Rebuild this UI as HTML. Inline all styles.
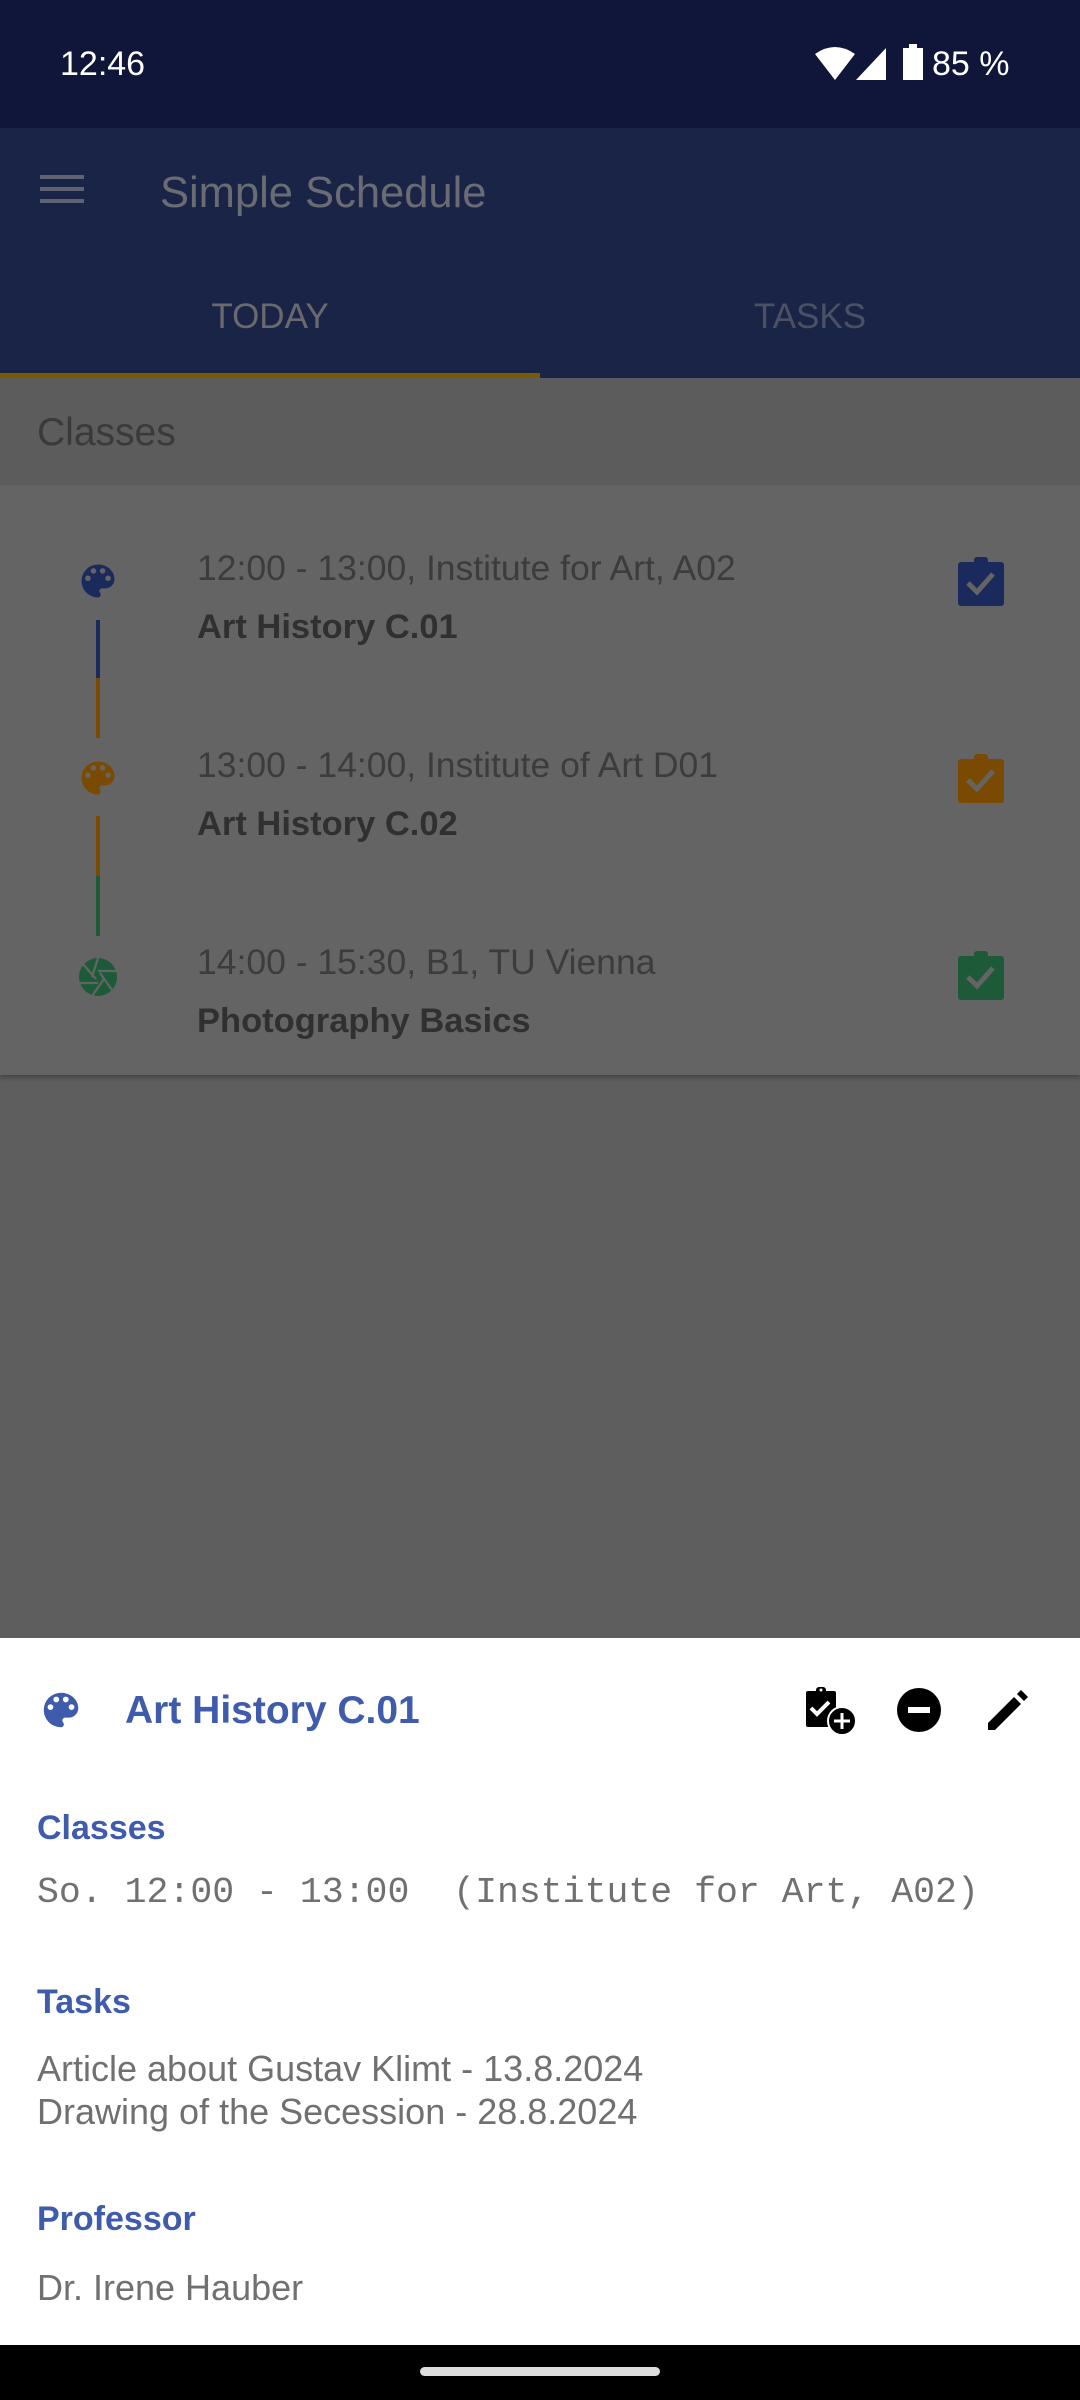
<!DOCTYPE html>
<html><head><meta charset="utf-8"><style>
*{margin:0;padding:0;box-sizing:border-box}
body{width:1080px;height:2400px;position:relative;overflow:hidden;background:#5e5e5e;font-family:"Liberation Sans",Roboto,sans-serif}
.a{position:absolute;white-space:pre}
svg{position:absolute}
</style></head><body>
<div class="a" style="left:0;top:0;width:1080px;height:128px;background:#10153a"></div>
<div class="a" style="left:60px;top:42px;color:#fff;font-size:34px;line-height:44px">12:46</div>
<svg style="left:815px;top:46px" width="40" height="34" viewBox="0 0 40 34"><path d="M0 8 Q20 -6 40 8 L20 34 Z" fill="#fff"/></svg>
<svg style="left:856px;top:48px" width="30" height="32" viewBox="0 0 30 32"><path d="M30 0 V32 H0 Z" fill="#fff"/></svg>
<svg style="left:903px;top:44px" width="20" height="36" viewBox="0 0 20 36"><path d="M6 0h8v4h6v32H0V4h6z" fill="#fff"/></svg>
<div class="a" style="left:932px;top:42px;color:#fff;font-size:34px;line-height:44px">85 %</div>

<div class="a" style="left:0;top:128px;width:1080px;height:250px;background:#1a2447"></div>
<div class="a" style="left:40px;top:175px;width:44px;height:4px;background:#5e6272;box-shadow:0 12px 0 #5e6272,0 24px 0 #5e6272"></div>
<div class="a" style="left:160px;top:166px;color:#6a6c74;font-size:43.5px;line-height:54px">Simple Schedule</div>
<div class="a" style="left:0;top:294px;width:540px;text-align:center;color:#6a6a6e;font-size:35px;line-height:46px">TODAY</div>
<div class="a" style="left:540px;top:294px;width:540px;text-align:center;color:#4b5063;font-size:35px;line-height:46px">TASKS</div>
<div class="a" style="left:0;top:373px;width:540px;height:5px;background:#7a5a00"></div>

<div class="a" style="left:0;top:378px;width:1080px;height:107px;background:#5c5c5c"></div>
<div class="a" style="left:37px;top:408px;color:#3a3a3a;font-size:39px;line-height:50px">Classes</div>
<div class="a" style="left:0;top:485px;width:1080px;height:590px;background:#646464;box-shadow:0 3px 4px rgba(0,0,0,.25)"></div>

<div class="a" style="left:96px;top:620px;width:4px;height:58px;background:#1b2a5c"></div>
<div class="a" style="left:96px;top:678px;width:4px;height:60px;background:#7a4a00"></div>
<div class="a" style="left:96px;top:816px;width:4px;height:60px;background:#7a4a00"></div>
<div class="a" style="left:96px;top:876px;width:4px;height:60px;background:#1c5a38"></div>

<svg style="left:76px;top:559px" width="44" height="44" viewBox="0 0 24 24"><path fill="#1b2a5c" d="M12 3a9 9 0 0 0 0 18c.83 0 1.5-.67 1.5-1.5 0-.39-.15-.74-.39-1.01-.23-.26-.38-.61-.38-.99 0-.83.67-1.5 1.5-1.5H16c2.760 0 5-2.24 5-5 0-4.42-4.03-8-9-8zm-5.5 9a1.5 1.5 0 1 1 0-3 1.5 1.5 0 0 1 0 3zm3-4a1.5 1.5 0 1 1 0-3 1.5 1.5 0 0 1 0 3zm5 0a1.5 1.5 0 1 1 0-3 1.5 1.5 0 0 1 0 3zm3 4a1.5 1.5 0 1 1 0-3 1.5 1.5 0 0 1 0 3z"/></svg>
<svg style="left:76px;top:756px" width="44" height="44" viewBox="0 0 24 24"><path fill="#7a4a00" d="M12 3a9 9 0 0 0 0 18c.83 0 1.5-.67 1.5-1.5 0-.39-.15-.74-.39-1.01-.23-.26-.38-.61-.38-.99 0-.83.67-1.5 1.5-1.5H16c2.76 0 5-2.24 5-5 0-4.42-4.03-8-9-8zm-5.5 9a1.5 1.5 0 1 1 0-3 1.5 1.5 0 0 1 0 3zm3-4a1.5 1.5 0 1 1 0-3 1.5 1.5 0 0 1 0 3zm5 0a1.5 1.5 0 1 1 0-3 1.5 1.5 0 0 1 0 3zm3 4a1.5 1.5 0 1 1 0-3 1.5 1.5 0 0 1 0 3z"/></svg>
<svg style="left:74px;top:953px" width="48" height="48" viewBox="0 0 24 24"><circle cx="12" cy="12" r="9.5" fill="#1c5a38"/><g stroke="#646464" stroke-width="1.1"><path d="M12 2.5 L9 12"/><path d="M21 9 L12 9"/><path d="M19 18.5 L13 10"/><path d="M9 21.5 L15 13"/><path d="M3 15 L12 15"/><path d="M4.5 5.5 L11 13"/></g></svg>

<div class="a" style="left:197px;top:545px;color:#3c3c3c;font-size:35.5px;line-height:46px">12:00 - 13:00, Institute for Art, A02</div>
<div class="a" style="left:197px;top:604px;color:#303030;font-size:34.5px;line-height:46px;font-weight:bold">Art History C.01</div>
<div class="a" style="left:197px;top:742px;color:#3c3c3c;font-size:35.5px;line-height:46px">13:00 - 14:00, Institute of Art D01</div>
<div class="a" style="left:197px;top:801px;color:#303030;font-size:34.5px;line-height:46px;font-weight:bold">Art History C.02</div>
<div class="a" style="left:197px;top:939px;color:#3c3c3c;font-size:35.5px;line-height:46px">14:00 - 15:30, B1, TU Vienna</div>
<div class="a" style="left:197px;top:998px;color:#303030;font-size:34.5px;line-height:46px;font-weight:bold">Photography Basics</div>

<svg style="left:957px;top:556px" width="48" height="52" viewBox="0 0 48 52"><rect x="1" y="6" width="46" height="44" rx="3" fill="#1b2a5c"/><rect x="17" y="1" width="14" height="9" rx="3" fill="#1b2a5c"/><path d="M11 27 L20 36 L36 18" stroke="#646464" stroke-width="5" fill="none"/></svg>
<svg style="left:957px;top:753px" width="48" height="52" viewBox="0 0 48 52"><rect x="1" y="6" width="46" height="44" rx="3" fill="#7a4a00"/><rect x="17" y="1" width="14" height="9" rx="3" fill="#7a4a00"/><path d="M11 27 L20 36 L36 18" stroke="#646464" stroke-width="5" fill="none"/></svg>
<svg style="left:957px;top:950px" width="48" height="52" viewBox="0 0 48 52"><rect x="1" y="6" width="46" height="44" rx="3" fill="#1c5a38"/><rect x="17" y="1" width="14" height="9" rx="3" fill="#1c5a38"/><path d="M11 27 L20 36 L36 18" stroke="#646464" stroke-width="5" fill="none"/></svg>

<div class="a" style="left:0;top:1638px;width:1080px;height:707px;background:#fff"></div>
<svg style="left:38px;top:1687px" width="46" height="46" viewBox="0 0 24 24"><path fill="#3f5bab" d="M12 3a9 9 0 0 0 0 18c.83 0 1.5-.67 1.5-1.5 0-.39-.15-.74-.39-1.01-.23-.26-.38-.61-.38-.99 0-.83.67-1.5 1.5-1.5H16c2.76 0 5-2.24 5-5 0-4.42-4.03-8-9-8zm-5.5 9a1.5 1.5 0 1 1 0-3 1.5 1.5 0 0 1 0 3zm3-4a1.5 1.5 0 1 1 0-3 1.5 1.5 0 0 1 0 3zm5 0a1.5 1.5 0 1 1 0-3 1.5 1.5 0 0 1 0 3zm3 4a1.5 1.5 0 1 1 0-3 1.5 1.5 0 0 1 0 3z"/></svg>
<div class="a" style="left:125px;top:1686px;color:#3f5bab;font-size:39px;line-height:50px;font-weight:bold">Art History C.01</div>
<svg style="left:804px;top:1686px" width="54" height="50" viewBox="0 0 54 50"><rect x="2" y="5" width="30" height="36" rx="2" fill="#000"/><rect x="12" y="1" width="10" height="8" rx="3" fill="#000"/><circle cx="17" cy="4" r="1.5" fill="#fff"/><path d="M7 22 L13 28 L25 16" stroke="#fff" stroke-width="4" fill="none"/><circle cx="38" cy="35" r="14" fill="#000" stroke="#fff" stroke-width="2"/><path d="M38 27 V43 M30 35 H46" stroke="#fff" stroke-width="3"/></svg>
<svg style="left:897px;top:1688px" width="44" height="44" viewBox="0 0 44 44"><circle cx="22" cy="22" r="22" fill="#000"/><rect x="11" y="19" width="22" height="6" fill="#fff"/></svg>
<svg style="left:986px;top:1688px" width="44" height="44" viewBox="0 0 44 44"><path d="M2 35 L28 9 L35 16 L9 42 H2 Z" fill="#000"/><path d="M31 6 L35 2 L42 9 L38 13 Z" fill="#000"/></svg>

<div class="a" style="left:37px;top:1806px;color:#3f5bab;font-size:34px;line-height:44px;font-weight:bold">Classes</div>
<div class="a" style="left:37px;top:1870px;color:#707070;font-size:36.5px;line-height:46px;font-family:'Liberation Mono',monospace">So. 12:00 - 13:00  (Institute for Art, A02)</div>
<div class="a" style="left:37px;top:1980px;color:#3f5bab;font-size:34px;line-height:44px;font-weight:bold">Tasks</div>
<div class="a" style="left:37px;top:2047px;color:#707070;font-size:36px;line-height:43px">Article about Gustav Klimt - 13.8.2024
Drawing of the Secession - 28.8.2024</div>
<div class="a" style="left:37px;top:2197px;color:#3f5bab;font-size:34px;line-height:44px;font-weight:bold">Professor</div>
<div class="a" style="left:37px;top:2265px;color:#707070;font-size:36px;line-height:46px">Dr. Irene Hauber</div>

<div class="a" style="left:0;top:2345px;width:1080px;height:55px;background:#000"></div>
<div class="a" style="left:420px;top:2367px;width:240px;height:9px;border-radius:5px;background:#ddd"></div>
</body></html>
